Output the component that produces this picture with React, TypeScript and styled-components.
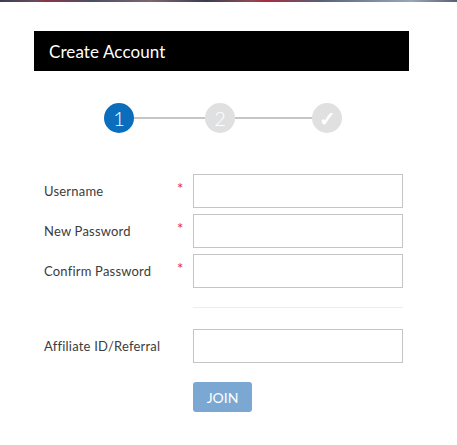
import React from "react";
import styled, { createGlobalStyle } from "styled-components";

const Global = createGlobalStyle`
  html, body { margin: 0; padding: 0; background: #ffffff; }
  body { font-family: "Lato", "Open Sans", sans-serif; }
  * { box-sizing: border-box; }
`;

const TopStrip = styled.div`
  height: 2px;
  background: linear-gradient(90deg, #3a3f55 0%, #6b4a5c 8%, #8a3446 10%, #4a4f66 20%, #7d6670 33%, #3b3e52 45%, #8c4a55 55%, #a82c3c 58%, #566079 70%, #7e8ca5 82%, #9aa5b8 90%, #5a6074 100%);
`;

const Page = styled.div`
  padding: 29px 0 0 34px;
  width: 409px;
`;

const Header = styled.div`
  height: 40px;
  background: #000;
  color: #fff;
  display: flex;
  align-items: center;
  padding-left: 15px;
  font-size: 17px;
  letter-spacing: 0.1px;
`;

const Stepper = styled.div`
  margin-top: 32px;
  display: flex;
  align-items: center;
  justify-content: center;
  padding-left: 3px;
`;

const Circle = styled.div<{ $active?: boolean; $bold?: boolean }>`
  width: 30px;
  height: 30px;
  border-radius: 50%;
  background: ${(p) => (p.$active ? "#0a6ebd" : "#e0e0e0")};
  color: #fff;
  display: flex;
  align-items: center;
  justify-content: center;
  font-size: 20px;
  font-weight: ${(p) => (p.$bold ? 700 : 300)};
  line-height: 1;
`;

const Line = styled.div<{ $w: number }>`
  width: ${(p) => p.$w}px;
  height: 2px;
  background: #c6c6c6;
`;

const Form = styled.div`
  margin-top: 41px;
  display: flex;
  flex-direction: column;
  gap: 6px;
`;

const Row = styled.div`
  display: grid;
  grid-template-columns: 133px 16px 210px;
  align-items: center;
  padding-left: 10px;
`;

const Label = styled.div`
  font-size: 13px;
  color: #3c3c3c;
  letter-spacing: 0.2px;
`;

const Star = styled.div`
  color: #e2262b;
  font-size: 15px;
  margin-top: -7px;
`;

const Input = styled.div`
  height: 34px;
  border: 1px solid #c4c4c4;
  background: #fff;
`;

const Divider = styled.div`
  margin: 13px 0 15px 159px;
  width: 210px;
  height: 1px;
  background: #ececec;
`;

const ButtonRow = styled.div`
  margin-top: 19px;
  padding-left: 159px;
`;

const Join = styled.div`
  width: 59px;
  height: 30px;
  border-radius: 3px;
  background: #7ba8d3;
  color: #fff;
  font-size: 14px;
  display: flex;
  align-items: center;
  justify-content: center;
`;

export default function App() {
  return (
    <>
      <Global />
      <TopStrip />
      <Page>
        <Header>Create Account</Header>
        <Stepper>
          <Circle $active>1</Circle>
          <Line $w={71} />
          <Circle>2</Circle>
          <Line $w={77} />
          <Circle $bold>✓</Circle>
        </Stepper>
        <Form>
          <Row>
            <Label>Username</Label>
            <Star>*</Star>
            <Input />
          </Row>
          <Row>
            <Label>New Password</Label>
            <Star>*</Star>
            <Input />
          </Row>
          <Row>
            <Label>Confirm Password</Label>
            <Star>*</Star>
            <Input />
          </Row>
          <Divider />
          <Row>
            <Label>Affiliate ID/Referral</Label>
            <div />
            <Input />
          </Row>
        </Form>
        <ButtonRow>
          <Join>JOIN</Join>
        </ButtonRow>
      </Page>
    </>
  );
}
